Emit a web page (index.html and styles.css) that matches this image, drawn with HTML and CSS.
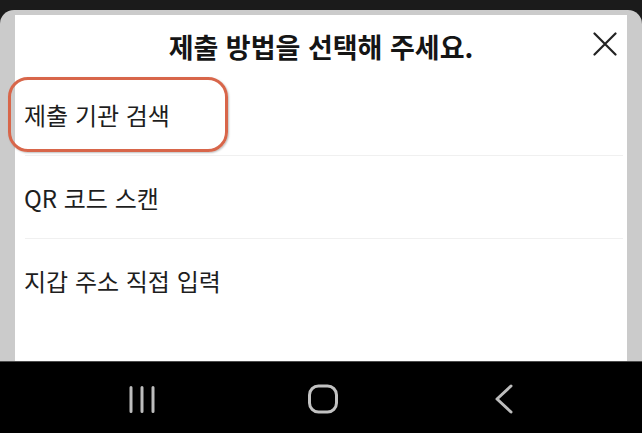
FILE: index.html
```html
<!DOCTYPE html>
<html lang="ko">
<head>
<meta charset="utf-8">
<title>제출 방법 선택</title>
<link rel="stylesheet" href="styles.css">
</head>
<body>
<div class="screen">
  <div class="statusbar"></div>
  <div class="frame">
    <div class="sheet">
      <div class="header">
        <span></span>
        <h1 class="title">제출 방법을 선택해 주세요.</h1>
        <button class="close" aria-label="닫기">
          <svg width="24" height="24" viewBox="0 0 24 24"><path d="M1.5 1.5 L22.5 22.5 M22.5 1.5 L1.5 22.5" stroke="#222" stroke-width="2.2" fill="none" stroke-linecap="round"/></svg>
        </button>
      </div>
      <ul class="options">
        <li class="option">제출 기관 검색</li>
        <li class="divider"></li>
        <li class="option">QR 코드 스캔</li>
        <li class="divider"></li>
        <li class="option">지갑 주소 직접 입력</li>
      </ul>
      <div class="highlight"></div>
    </div>
  </div>
  <div class="navline"></div>
  <nav class="nav">
    <span class="navbtn">
      <svg width="28" height="28" viewBox="0 0 28 28"><path d="M3 2.5 V26.5 M14 2.5 V26.5 M25 2.5 V26.5" stroke="#bdbdbd" stroke-width="3" stroke-linecap="round" fill="none"/></svg>
    </span>
    <span class="navbtn">
      <svg width="32" height="30" viewBox="0 0 32 30"><rect x="2.5" y="2" width="27" height="26" rx="9" ry="9" stroke="#c2c2c2" stroke-width="3" fill="none"/></svg>
    </span>
    <span class="navbtn">
      <svg width="20" height="30" viewBox="0 0 20 30"><path d="M17 2 L3 15 L17 28" stroke="#bdbdbd" stroke-width="3" stroke-linecap="round" stroke-linejoin="round" fill="none"/></svg>
    </span>
  </nav>
</div>
</body>
</html>
```
FILE: styles.css
```css
html, body {
  margin: 0;
  padding: 0;
  background: #1b1b1b;
}
.screen {
  width: 642px;
  height: 433px;
  display: flex;
  flex-direction: column;
  font-family: "Noto Sans CJK KR", "Noto Sans", sans-serif;
  overflow: hidden;
}
.statusbar {
  height: 10px;
  background: #1b1b1b;
  flex: none;
}
.frame {
  flex: none;
  height: 351px;
  box-sizing: border-box;
  background: #cbcbcb;
  border-radius: 14px 14px 0 0;
  padding: 5px 15px 0 15px;
  display: flex;
}
.sheet {
  flex: 1;
  background: #ffffff;
  position: relative;
}
.header {
  height: 58px;
  display: grid;
  grid-template-columns: 1fr auto 1fr;
  align-items: center;
}
.title {
  margin: 0;
  font-size: 27px;
  font-weight: 700;
  color: #151515;
  letter-spacing: 0;
  line-height: 1;
  padding-top: 4px;
}
.close {
  justify-self: end;
  margin-right: 10px;
  width: 24px;
  height: 24px;
  padding: 0;
  border: 0;
  background: none;
  display: flex;
}
.options {
  list-style: none;
  margin: 0;
  padding: 0;
}
.option {
  height: 82px;
  display: flex;
  align-items: center;
  padding-left: 9px;
  font-size: 24px;
  color: #1e1e1e;
  letter-spacing: 0;
}
.divider {
  height: 1px;
  background: #f0f0f0;
  margin: 0 4px 0 10px;
}
.highlight {
  position: absolute;
  left: -7px;
  top: 62px;
  width: 220px;
  height: 75px;
  box-sizing: border-box;
  border: 3.5px solid #d8664a;
  border-radius: 20px;
  box-shadow: 1px 1px 2px rgba(0, 0, 0, 0.25);
}
.navline {
  height: 1px;
  background: #4c4c4c;
  flex: none;
}
.nav {
  flex: none;
  height: 71px;
  background: #000000;
  display: flex;
  align-items: center;
  padding-left: 122px;
  padding-top: 2px;
  box-sizing: border-box;
  gap: 141px;
}
.navbtn {
  width: 40px;
  display: flex;
  justify-content: center;
}
```
